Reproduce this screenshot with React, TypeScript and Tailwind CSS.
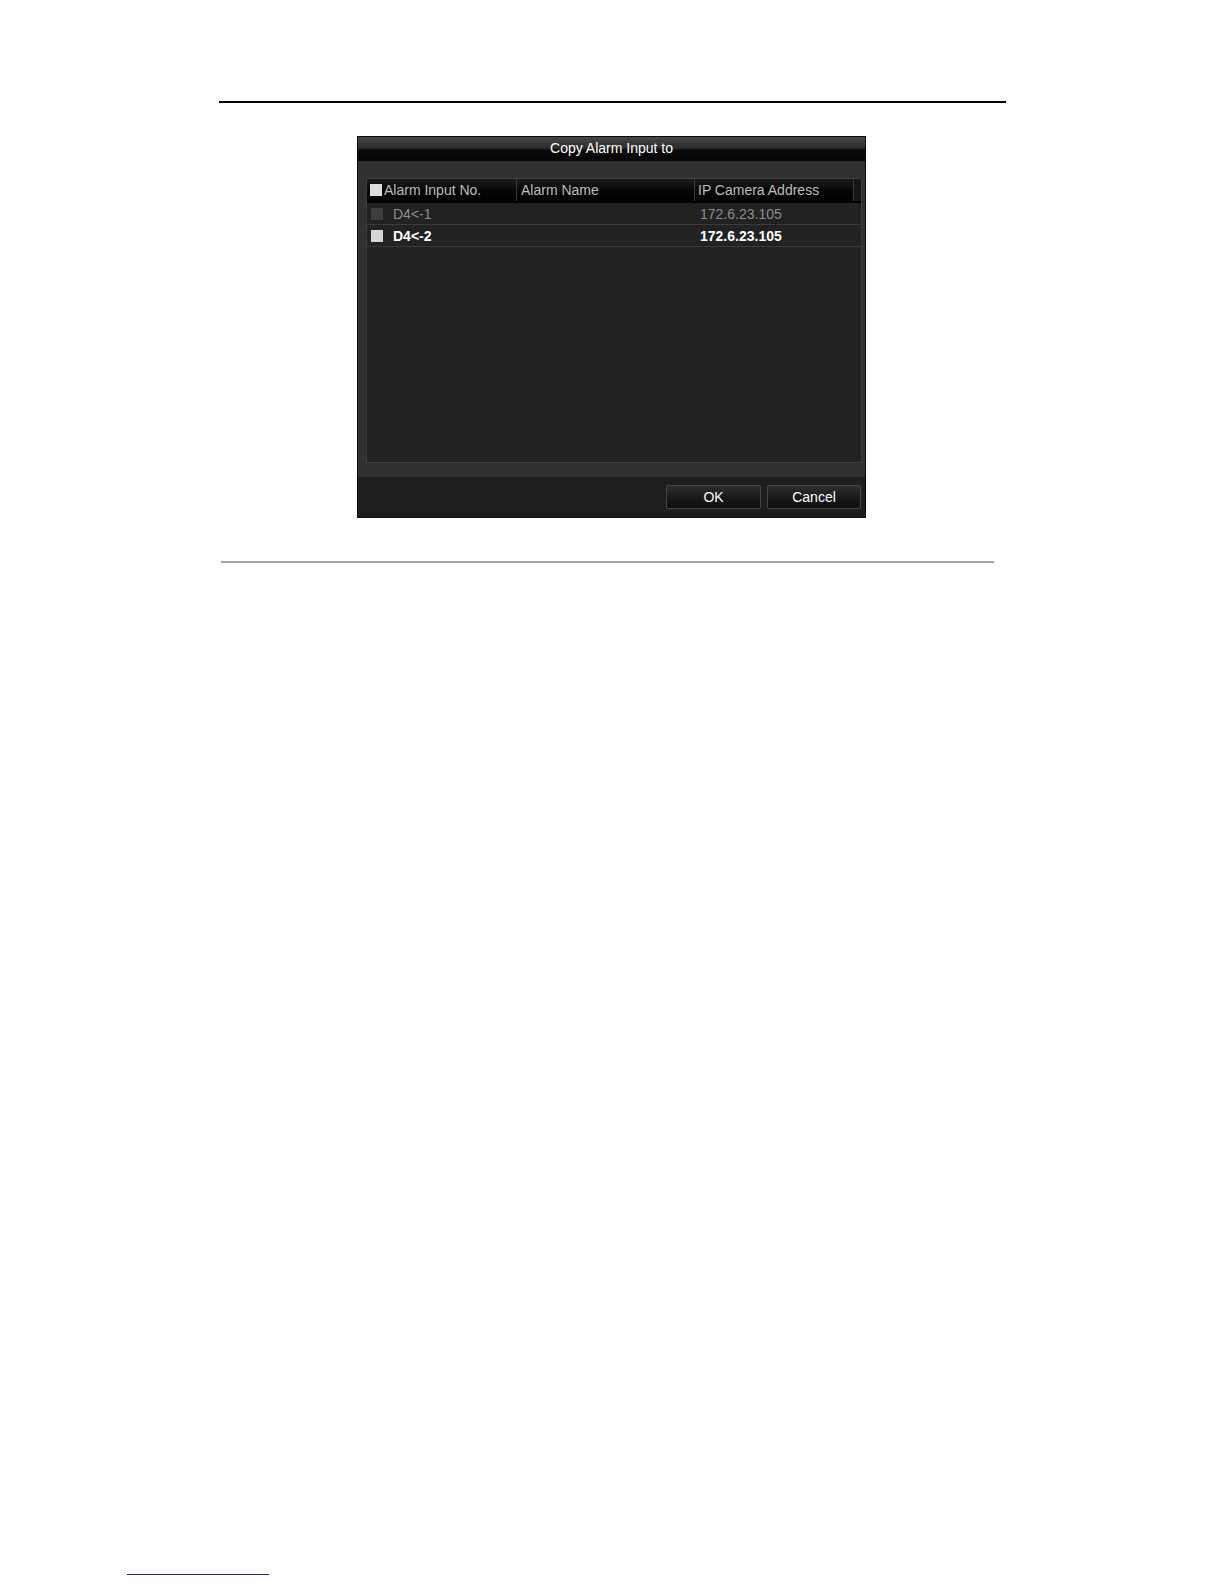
import React from "react";

const rows = [
  { no: "D4<-1", name: "", ip: "172.6.23.105", enabled: false },
  { no: "D4<-2", name: "", ip: "172.6.23.105", enabled: true },
];

const CopyDialog = () => {
  return (
    <div className="ml-[357px] mt-[33px] flex h-[382px] w-[509px] flex-col border border-[#0a0a0a] bg-[#313131] text-[14px] leading-none">
      {/* title bar */}
      <div className="flex h-[24px] shrink-0 items-center justify-center bg-[linear-gradient(to_bottom,#474747_0%,#2e2e2e_45%,#0b0b0b_55%,#050505_100%)] pb-[2px] text-white">
        Copy Alarm Input to
      </div>

      <div className="flex flex-1 flex-col pt-[17px] pb-[14px] pl-[8px] pr-[3px]">
        <div className="flex flex-1 flex-col border border-[#3d3d3d] bg-[#222222]">
          {/* header */}
          <div className="flex h-[24px] shrink-0 bg-[linear-gradient(to_bottom,#1c1c1c_0%,#060606_50%,#000000_100%)] pb-[2px] text-[#bdbdbd]">
            <div className="flex w-[150px] items-center gap-[2px] border-r border-[#3a3a3a] pl-[3px]">
              <span className="h-[12px] w-[12px] bg-[#dcdcdc]" />
              <span>Alarm Input No.</span>
            </div>
            <div className="flex w-[178px] items-center border-r border-[#3a3a3a] pl-[4px]">
              Alarm Name
            </div>
            <div className="flex w-[159px] items-center border-r border-[#3a3a3a] pl-[3px]">
              IP Camera Address
            </div>
            <div className="flex-1 bg-[#161616]" />
          </div>

          {rows.map((r) => (
            <div
              key={r.no}
              className={`flex h-[22px] shrink-0 items-center border-b border-[#3b3b3b] ${
                r.enabled ? "font-bold text-white" : "text-[#8c8c8c]"
              }`}
            >
              <div className="flex w-[151px] items-center gap-[10px] pl-[4px]">
                <span
                  className={`h-[12px] w-[12px] ${
                    r.enabled ? "bg-[#d6d6d6]" : "bg-[#3e3e3e]"
                  }`}
                />
                <span>{r.no}</span>
              </div>
              <div className="w-[178px] pl-[4px]">{r.name}</div>
              <div className="pl-[4px]">{r.ip}</div>
            </div>
          ))}
        </div>
      </div>

      {/* footer */}
      <div className="flex h-[40px] shrink-0 items-start justify-end gap-[6px] bg-[#1e1e1e] pt-[8px] pr-[4px]">
        <button className="flex h-[24px] w-[95px] items-center justify-center rounded-[2px] border border-[#454545] bg-[linear-gradient(to_bottom,#2e2e2e_0%,#1a1a1a_50%,#0e0e0e_100%)] text-white">
          OK
        </button>
        <button className="flex h-[24px] w-[94px] items-center justify-center rounded-[2px] border border-[#454545] bg-[linear-gradient(to_bottom,#2e2e2e_0%,#1a1a1a_50%,#0e0e0e_100%)] text-white">
          Cancel
        </button>
      </div>
    </div>
  );
};

export default function App() {
  return (
    <div
      className="flex h-[1584px] w-[1224px] flex-col bg-white"
      style={{ fontFamily: '"Liberation Sans", Arial, sans-serif' }}
    >
      <div className="ml-[219px] mt-[101px] h-[2px] w-[787px] bg-black" />
      <CopyDialog />
      <div className="ml-[221px] mt-[43px] h-[2px] w-[773px] bg-[#a3a3a3]" />
      <div className="ml-[127px] mt-[1011px] h-[1px] w-[142px] bg-[#1c1c8a]" />
    </div>
  );
}
